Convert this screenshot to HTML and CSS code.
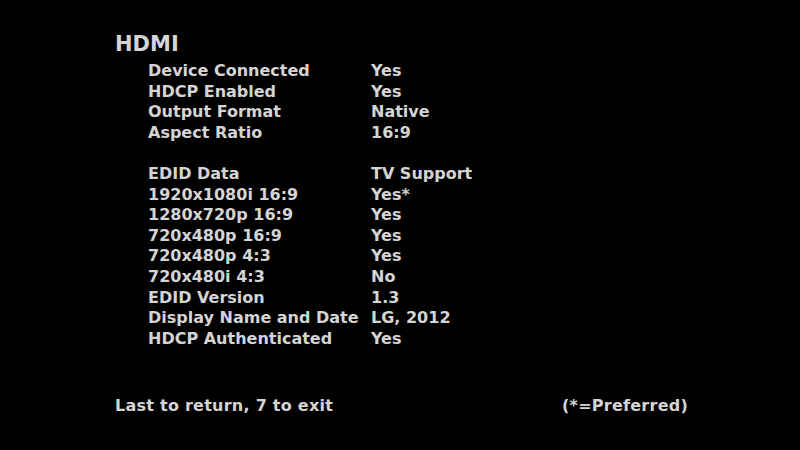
FILE: index.html
```html
<!DOCTYPE html>
<html>
<head>
<meta charset="utf-8">
<link rel="stylesheet" href="styles.css">
</head>
<body>
<div class="screen">
  <h1 class="title">HDMI</h1>
  <div class="table">
    <div class="row"><span class="label">Device Connected</span><span class="value">Yes</span></div>
    <div class="row"><span class="label">HDCP Enabled</span><span class="value">Yes</span></div>
    <div class="row"><span class="label">Output Format</span><span class="value">Native</span></div>
    <div class="row"><span class="label">Aspect Ratio</span><span class="value">16:9</span></div>
    <div class="row gap"></div>
    <div class="row"><span class="label">EDID Data</span><span class="value">TV Support</span></div>
    <div class="row"><span class="label">1920x1080i 16:9</span><span class="value">Yes*</span></div>
    <div class="row"><span class="label">1280x720p 16:9</span><span class="value">Yes</span></div>
    <div class="row"><span class="label">720x480p 16:9</span><span class="value">Yes</span></div>
    <div class="row"><span class="label">720x480p 4:3</span><span class="value">Yes</span></div>
    <div class="row"><span class="label">720x480i 4:3</span><span class="value">No</span></div>
    <div class="row"><span class="label">EDID Version</span><span class="value">1.3</span></div>
    <div class="row"><span class="label">Display Name and Date</span><span class="value">LG, 2012</span></div>
    <div class="row"><span class="label">HDCP Authenticated</span><span class="value">Yes</span></div>
  </div>
  <div class="footer">
    <span>Last to return, 7 to exit</span>
    <span>(*=Preferred)</span>
  </div>
</div>
</body>
</html>
```
FILE: styles.css
```css
html, body {
  margin: 0;
  padding: 0;
  background: #000;
}
.screen {
  width: 800px;
  height: 450px;
  box-sizing: border-box;
  padding: 30px 112px 0 115px;
  font-family: "DejaVu Sans", sans-serif;
  font-weight: bold;
  color: #d4d4d4;
  display: flex;
  flex-direction: column;
}
.title {
  margin: 0;
  font-size: 21px;
  font-weight: bold;
  line-height: 28px;
}
.table {
  margin-top: 3px;
  padding-left: 33px;
  display: flex;
  flex-direction: column;
}
.row {
  display: grid;
  grid-template-columns: 223px 1fr;
  height: 20.6px;
  line-height: 20.6px;
  font-size: 16px;
  white-space: nowrap;
}
.footer {
  margin-top: 47px;
  display: flex;
  justify-content: space-between;
  font-size: 16px;
  letter-spacing: 0.25px;
  line-height: 20px;
}
```
